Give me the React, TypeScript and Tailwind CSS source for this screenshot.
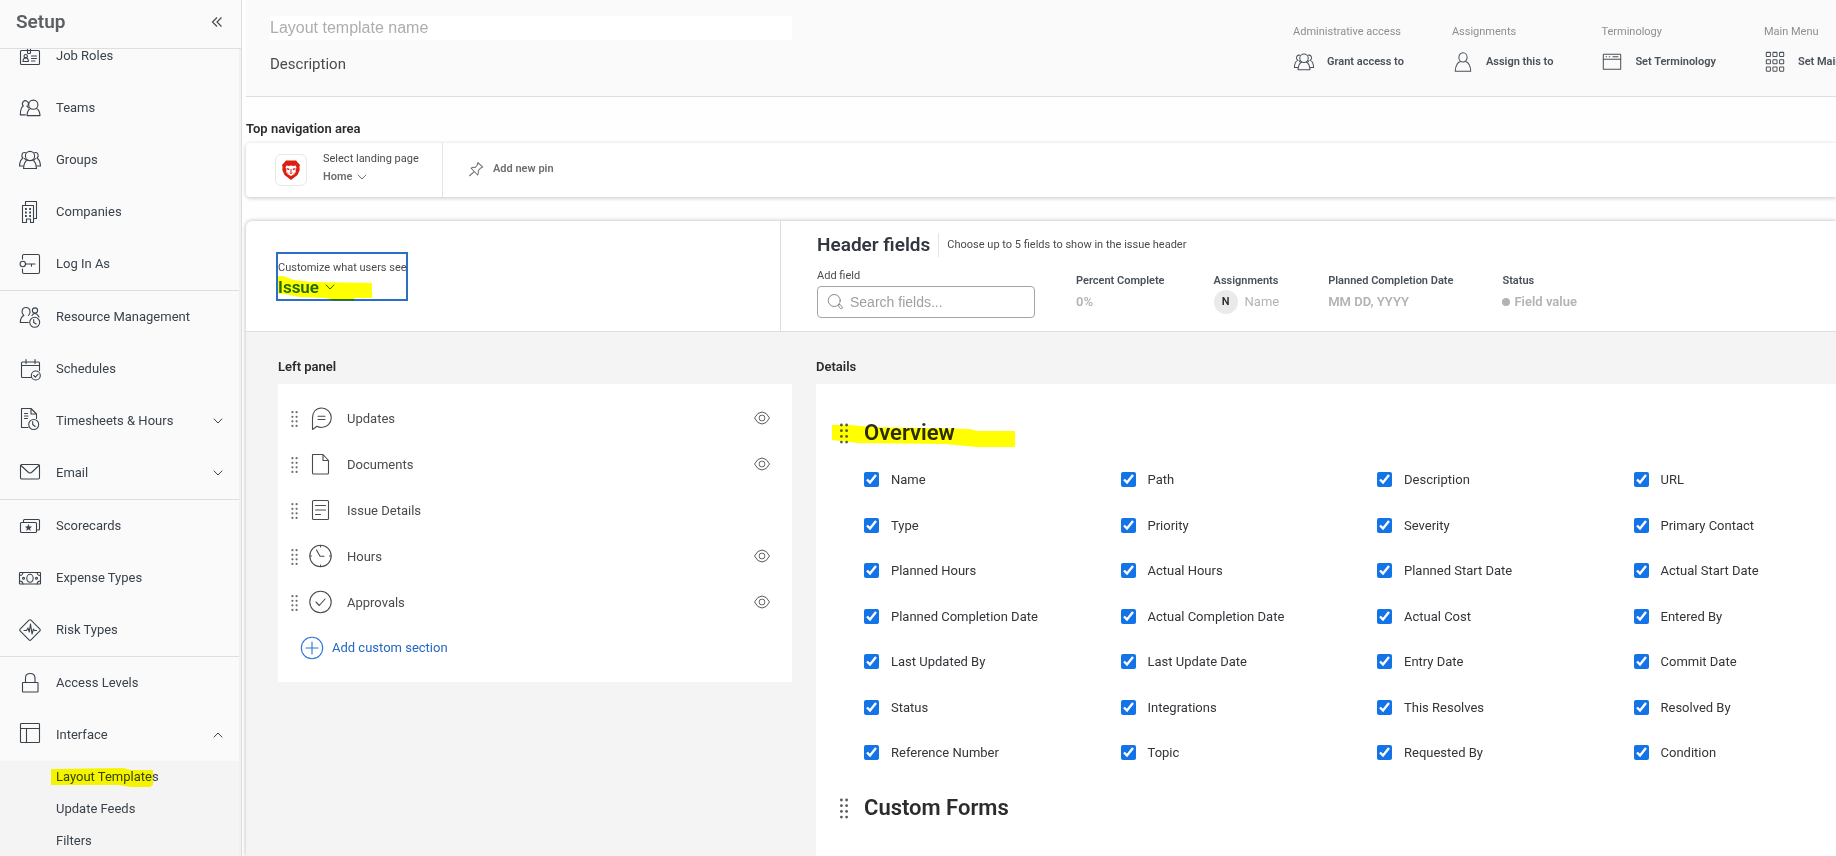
import React from "react";

interface INavItem {
	label: string;
	icon: React.ReactNode;
	chevron?: "up" | "down";
}

function Icon({ children, className = "size-6" }: { children: React.ReactNode; className?: string }) {
	return (
		<svg
			className={`shrink-0 overflow-visible ${className}`}
			viewBox="0 0 24 24"
			fill="none"
			stroke="currentColor"
			strokeWidth="1.1"
			strokeLinecap="round"
			strokeLinejoin="round"
			aria-hidden="true"
		>
			{children}
		</svg>
	);
}

function Chevron({ up = false }: { up?: boolean }) {
	return (
		<svg className="w-[10px] shrink-0" viewBox="0 0 10 6" fill="none" stroke="currentColor" aria-hidden="true">
			<path d={up ? "M.8 5.300L5 1L9.200 5.300" : "M.8 .7L5 5L9.200 .7"} />
		</svg>
	);
}

function Dots({ className }: { className: string }) {
	return (
		<svg className={`shrink-0 ${className}`} viewBox="0 0 8 20" fill="currentColor" aria-hidden="true">
			{[1.5, 7.2, 12.9, 18.6].map((y) => (
				<g key={y}>
					<circle cx="1.4" cy={y} r="1.4" />
					<circle cx="6.6" cy={y} r="1.4" />
				</g>
			))}
		</svg>
	);
}

const jobRoles = (
	<>
		<rect x="2.5" y="6.5" width="19" height="14" rx="1" />
		<path d="M9.5 4v4.5q0 1 1 1h1q1 0 1-1V4" />
		<circle cx="7.7" cy="12.2" r="1.7" />
		<path d="M5 17.5q0-3 1.8-3.6h1.8q1.8.6 1.8 3.6zM13.5 12h5M13.5 14.5h5M13.5 17h3.5" />
	</>
);

const teams = (
	<>
		<circle cx="15.3" cy="8.7" r="4.6" />
		<path d="M12.6 12.6q-3.2 1.2-3.6 7h13q-.4-5.800-3.600-7" />
		<path d="M10 9.300a3 3 0 1 0-4.700.600Q2.600 11 2.300 18.900h5" />
		<path d="M8.800 10q1.200.800 1.700 2" />
	</>
);

const groups = (
	<>
		<circle cx="12" cy="8" r="4.600" />
		<path d="M9.600 12q-3.700 1.400-4.100 8.500h13q-.4-7.100-4.100-8.500" />
		<path d="M7.500 4.700q-2.600-.8-3.500 1.600q-.6 2.300 1 3.900Q1.900 11.500 1.500 18H5" />
		<path d="M16.500 4.700q2.600-.8 3.500 1.600q.6 2.300-1 3.900q3.100 1.300 3.500 7.800H19" />
		<path d="M6.500 10.500l1.300 1.400M17.500 10.500l-1.300 1.400" />
	</>
);

const person = (
	<>
		<ellipse cx="12" cy="7" rx="4.500" ry="5" />
		<path d="M9 11.500q-5 2-5.500 10.500h17q-.5-8.500-5.500-10.500" />
	</>
);

const companies = (
	<>
		<path d="M4.500 5.500h11v17h-3v-3.500h-4v3.500h-4z" />
		<path d="M7.500 5V1.500h11v17h-2.500" />
		<path strokeWidth="1.800" strokeLinecap="butt" d="M7 9h1.800M11.200 9H13M7 12.500h1.800M11.200 12.500H13M7 16h1.800M11.200 16H13" />
	</>
);

const navGroups: INavItem[][] = [
	[
		{ label: "Job Roles", icon: jobRoles },
		{ label: "Teams", icon: teams },
		{ label: "Groups", icon: groups },
		{ label: "Companies", icon: companies },
		{
			label: "Log In As",
			icon: (
				<>
					<path d="M4.500 7V4q0-1.500 1.500-1.500h14q1.500 0 1.500 1.500v16q0 1.500-1.500 1.500H6q-1.500 0-1.500-1.500v-3" />
					<circle cx="4.800" cy="12" r="2.700" />
					<path d="M7.500 12H17M13.500 12v2.200" />
				</>
			),
		},
	],
	[
		{
			label: "Resource Management",
			icon: (
				<>
					<path d="M5.800 10.500C2.500 7 4 2.500 8 2.500s5.500 4.500 2.500 8M5.800 10.500Q2.500 12 2.300 17.500h8" />
					<circle cx="17" cy="5.500" r="2.600" />
					<path d="M14 10.500q1-2 3-2t4 3.500" />
					<circle cx="16.700" cy="17.300" r="5" />
					<path d="M15.700 14.500v3l2.500 1.500" />
				</>
			),
		},
		{
			label: "Schedules",
			icon: (
				<>
					<path d="M13 20.500H4.500q-1 0-1-1V6q0-1 1-1h16q1 0 1 1v7.500M3.500 8.500h18M8 2.500v4M17 2.500v4" />
					<circle cx="17.800" cy="18.500" r="4.500" />
					<path d="M15.700 18.500l1.700 1.700 2.700-3" />
				</>
			),
		},
		{
			label: "Timesheets & Hours",
			chevron: "down",
			icon: (
				<>
					<path d="M10 18.500H3.500v-19h9.500l5.500 5.500v4.500M13 -.5V5h5.500M6.500 4.500h3M6.500 7h3.500M6.500 9.500h3" />
					<circle cx="15.700" cy="15.500" r="5" />
					<path d="M14.700 12.500v3l2.500 2" />
				</>
			),
		},
		{
			label: "Email",
			chevron: "down",
			icon: (
				<>
					<rect x="2.500" y="3.500" width="19" height="14.500" rx="1.200" />
					<path d="M3 4.500l7.500 7q1.500 1 3 0L21 4.500" />
				</>
			),
		},
	],
	[
		{
			label: "Scorecards",
			icon: (
				<>
					<rect x="2.500" y="8.500" width="16" height="10" rx="1" />
					<path d="M5.500 8V6.500q0-1 1-1h14q1 0 1 1v8.500q0 1-1 1h-1.500" />
					<path fill="currentColor" strokeWidth=".3" d="M10.500 10.500l.9 2.100 2.300.1-1.800 1.500.6 2.300-2-1.300-2 1.300.6-2.300-1.800-1.500 2.300-.1z" />
				</>
			),
		},
		{
			label: "Expense Types",
			icon: (
				<>
					<rect x="1.500" y="6.500" width="21" height="11.500" rx=".5" />
					<ellipse cx="12" cy="12.300" rx="3.200" ry="4" />
					<circle cx="5.500" cy="12.300" r="1" />
					<circle cx="18.500" cy="12.300" r="1" />
					<path d="M2 9.500q2.500 0 3-3M22 9.500q-2.500 0-3-3M2 15q2.500 0 3 3M22 15q-2.500 0-3 3" />
				</>
			),
		},
		{
			label: "Risk Types",
			icon: (
				<>
					<path d="M11 2.200q1-1 2 0l8.900 8.900q.9.900 0 1.800L13 21.800q-1 1-2 0L2.100 12.900q-.9-.9 0-1.800z" />
					<path d="M6 12.500h2.500l1.500-2.500 1.300 4 1.200-8 1.500 10 1.500-5 .9 1.500h2.100" />
				</>
			),
		},
	],
	[
		{
			label: "Access Levels",
			icon: (
				<>
					<rect x="4.500" y="11.500" width="15.500" height="9.500" rx=".5" />
					<path d="M7.500 11V7q0-4.500 4.700-4.500T17 7v4" />
				</>
			),
		},
		{
			label: "Interface",
			chevron: "up",
			icon: (
				<>
					<rect x="2.500" y=".5" width="19" height="19" rx=".8" />
					<path d="M2.500 5.500h19M8.500 5.500v14" />
				</>
			),
		},
	],
];

const headerActions = [
	{ title: "Administrative access", label: "Grant access to", icon: groups },
	{ title: "Assignments", label: "Assign this to", icon: person },
	{
		title: "Terminology",
		label: "Set Terminology",
		icon: (
			<>
				<rect x="2.500" y="3.500" width="19" height="16.500" rx=".5" />
				<path d="M2.500 9h19M5.500 6.300h.6M9 6.300h.6M13 6.300h5.500" />
			</>
		),
	},
	{
		title: "Main Menu",
		label: "Set Main Menu",
		icon: (
			<>
				{[1.5, 9.5, 17.5].map((y) =>
					[2.5, 9.7, 17].map((x) => <rect key={`${x}-${y}`} x={x} y={y} width="4.500" height="4.500" rx=".6" />)
				)}
			</>
		),
	},
];

const panelItems = [
	{
		label: "Updates",
		visible: true,
		icon: (
			<>
				<path d="M4.500 22.500V11C4.500 5 8 1 13.500 1S23.300 5.500 23.300 10.800 19 20.500 13.500 20.500q-2.500 0-4.500-1.200z" />
				<path d="M10 9.200h7M10 12.500h7" />
			</>
		),
	},
	{
		label: "Documents",
		visible: true,
		icon: <path d="M4.500 1.500h10.500l5.500 6v12.500q0 1-1 1h-14q-1 0-1-1zM15 1.500v6h5.500" />,
	},
	{
		label: "Issue Details",
		visible: false,
		icon: (
			<>
				<rect x="4.500" y="1.500" width="16" height="19" rx="1" />
				<path d="M7.500 6.500h10M7.500 11h10M7.500 15.500h5" />
			</>
		),
	},
	{
		label: "Hours",
		visible: true,
		icon: (
			<>
				<circle cx="12.500" cy="11" r="10.700" />
				<path d="M8.500 5l3.500 6.300h4M12.500 .5V2M12.500 20v1.500M2 11h1.500M21.500 11H23" />
			</>
		),
	},
	{
		label: "Approvals",
		visible: true,
		icon: (
			<>
				<circle cx="12.500" cy="11" r="10.700" />
				<path d="M8 11l3.300 3.500L17 8" />
			</>
		),
	},
];

const fields = [
	"Name", "Path", "Description", "URL",
	"Type", "Priority", "Severity", "Primary Contact",
	"Planned Hours", "Actual Hours", "Planned Start Date", "Actual Start Date",
	"Planned Completion Date", "Actual Completion Date", "Actual Cost", "Entered By",
	"Last Updated By", "Last Update Date", "Entry Date", "Commit Date",
	"Status", "Integrations", "This Resolves", "Resolved By",
	"Reference Number", "Topic", "Requested By", "Condition",
];

function Sidebar() {
	return (
		<aside className="w-[242px] shrink-0 flex flex-col border-r border-[#dedede] bg-[#f1f1f1]">
			<div className="h-[49px] shrink-0 flex items-center justify-between pl-4 pr-[18px] pb-1 border-b border-[#dedede] bg-[#fafafa]">
				<h1 className="text-[19px] leading-6 font-semibold text-[#5c5f63]">Setup</h1>
				<button type="button" aria-label="Collapse" className="text-[#4b4b4b]">
					<svg width="12" height="12" viewBox="0 0 12 12" fill="none" stroke="currentColor" strokeWidth="1.200">
						<path d="M6 1.500L1.500 6L6 10.500M10.500 1.500L6 6L10.500 10.500" />
					</svg>
				</button>
			</div>
			<nav className="flex-1 min-h-0 overflow-hidden mr-[2px] bg-[#fafafa]">
				<div className="-mt-5">
					{navGroups.map((group, i) => (
						<ul key={i} className="border-t border-[#dedede]">
							{group.map((item) => (
								<li key={item.label}>
									<a href="#" className="h-13 flex items-center gap-[14px] pl-[18px] pr-4 text-[13px] leading-4 text-[#3a424b]">
										<Icon>{item.icon}</Icon>
										<span className="flex-1">{item.label}</span>
										{item.chevron && <Chevron up={item.chevron === "up"} />}
									</a>
								</li>
							))}
						</ul>
					))}
					<ul className="bg-[#f4f4f4]">
						{["Layout Templates", "Update Feeds", "Filters"].map((label, i) => (
							<li key={label}>
								<a href="#" className="relative h-8 flex items-center pl-14 text-[13px] leading-4 text-[#3a424b]">
									{label}
									{i === 0 && (
										<svg className="absolute left-[51px] top-[7px] mix-blend-multiply" width="102" height="20" viewBox="0 0 102 20" fill="#ffff00" aria-hidden="true">
											<path d="M0 1L72 0L80 2H102V17L99 19H80L68 17H0z" />
										</svg>
									)}
								</a>
							</li>
						))}
					</ul>
				</div>
			</nav>
		</aside>
	);
}

function TemplateHeader() {
	return (
		<header className="h-[97px] flex border-b border-[#dedede] bg-[#fafafa] overflow-hidden">
			<div className="flex-1 min-w-0 pl-6 pt-4">
				<input
					type="text"
					aria-label="Layout template name"
					placeholder="Layout template name"
					className="block w-[51%] h-6 bg-white font-['Liberation_Sans',sans-serif] text-[16px] text-[#4b4b4b] placeholder:text-[#adadad] outline-none"
				/>
				<p className="mt-3 text-[15px] leading-6 text-[#4b4b4b]">Description</p>
			</div>
			<div className="w-[543px] shrink-0 flex gap-12 pt-6 whitespace-nowrap">
				{headerActions.map((action) => (
					<div key={action.title} className="shrink-0">
						<p className="text-[11px] leading-4 text-[#8c8f93]">{action.title}</p>
						<button type="button" className="mt-[11px] flex items-center gap-3 text-[11px] font-semibold text-[#4a5059]">
							<Icon className="size-[22px]">{action.icon}</Icon>
							{action.label}
						</button>
					</div>
				))}
			</div>
		</header>
	);
}

function TopNavigation() {
	return (
		<section>
			<h2 className="pt-[22px] pb-1 text-[13px] leading-5 font-semibold text-[#2c2c2c]">Top navigation area</h2>
			<div className="h-[54px] flex rounded-l bg-white shadow-[0_1px_4px_rgba(0,0,0,0.22)]">
				<div className="w-[197px] flex items-center gap-4 pl-[29px] border-r border-[#e4e4e4]">
					<div className="size-8 flex items-center justify-center rounded-md border border-[#e8e8e8]">
						<svg width="18" height="20" viewBox="0 0 18 20" aria-hidden="true">
							<path fill="#dd1f12" d="M4 .5h10l1.500 1.800L18 5l-.6 2 .3 3-2.200 5L9 20l-6.500-5L.3 10l.3-3L0 5l2.500-2.700z" />
							<path fill="#fff" d="M4.500 5.500l2.500.5L9 5.500l2 .5 2.500-.5 1 2.300-1 2.200.3 2-1.300 2L9 16l-3.500-2L4.200 12l.3-2-1-2.200z" />
							<path
								fill="#dd1f12"
								d="M4.500 8l3 .8-.5 1.400-2.300-.9zM13.500 8l-3 .8.5 1.400 2.300-.9zM7.300 12.500h3.400L9 14.200zM8.500 9h1v3h-1zM5.500 12l1 2-1-.5zM12.500 12l-1 2 1-.5z"
							/>
						</svg>
					</div>
					<div className="pb-1">
						<label htmlFor="landing" className="block text-[11px] leading-[18px] text-[#4b4b4b]">
							Select landing page
						</label>
						<div className="flex items-center gap-1 text-[#6e6e6e]">
							<select id="landing" className="appearance-none field-sizing-content bg-transparent text-[11px] leading-[18px] font-semibold outline-none">
								<option>Home</option>
							</select>
							<Chevron />
						</div>
					</div>
				</div>
				<button type="button" className="flex items-center gap-2 pl-6 pb-[2px] text-[11px] font-semibold text-[#6e6e6e]">
					<Icon className="size-[18px]">
						<path strokeWidth="1.400" d="M14.500 3.500l6.500 6-2 1-1 .3-3 3.500q.7 3-.8 5.700L5.500 11q2.500-1.700 5.500-1l2.500-3zM9.500 15.500L3.500 21" />
					</Icon>
					Add new pin
				</button>
			</div>
		</section>
	);
}

function HeaderFields() {
	const title = "text-[11px] leading-[18px] font-semibold text-[#4a5059]";
	const value = "h-6 flex items-center text-[13px] text-[#b3b3b3]";
	return (
		<div className="h-[111px] flex border-b border-[#dedede]">
			<div className="w-[535px] shrink-0 pl-[30px] pt-[31px] border-r border-[#dedede]">
				<div className="relative w-[132px] h-[49px] border-2 border-[#2a6fc4] pt-[5px]">
					<label htmlFor="object" className="block text-[11px] leading-[18px] whitespace-nowrap text-[#4b4b4b]">
						Customize what users see
					</label>
					<div className="flex items-center gap-[6px] text-[#1f6bc0]">
						<select id="object" className="appearance-none field-sizing-content bg-transparent text-[17px] leading-5 font-semibold outline-none">
							<option>Issue</option>
						</select>
						<Chevron />
					</div>
					<svg className="absolute left-0 top-[22px] mix-blend-multiply" width="94" height="25" viewBox="0 0 94 25" fill="#ffff00" aria-hidden="true">
						<path d="M0 0L5 0L16 4L34 6L94 7V22H76V24.500H56L48 22L22 21L0 17z" />
					</svg>
				</div>
			</div>
			<div className="flex-1 pl-9 pt-3">
				<div className="h-6 flex items-center gap-2">
					<h2 className="text-[19px] leading-6 font-semibold text-[#31363f]">Header fields</h2>
					<p className="h-6 flex items-center pl-2 border-l border-[#e4e4e4] text-[11px] text-[#4b4b4b]">
						Choose up to 5 fields to show in the issue header
					</p>
				</div>
				<div className="flex gap-[49px]">
					<div className="w-[218px] mt-[9px] -mr-2">
						<label htmlFor="search" className="block text-[11px] leading-5 text-[#4b4b4b]">
							Add field
						</label>
						<div className="h-8 flex items-center gap-[6px] px-2 rounded border border-[#a5a5a5]">
							<Icon className="size-[18px] text-[#6e6e6e]">
								<circle cx="11" cy="10" r="8" />
								<path d="M16.500 16l2-1 3 3.500q1 2-1 2.500-1 .2-1.800-.8z" />
							</Icon>
							<input
								id="search"
								type="text"
								placeholder="Search fields..."
								className="flex-1 min-w-0 font-['Liberation_Sans',sans-serif] text-[14px] placeholder:text-[#a0a0a0] outline-none"
							/>
						</div>
					</div>
					<div className="pt-[15px]">
						<p className={title}>Percent Complete</p>
						<p className={`${value} font-semibold`}>0%</p>
					</div>
					<div className="pt-[15px]">
						<p className={title}>Assignments</p>
						<p className={`${value} gap-[7px]`}>
							<span className="size-6 flex items-center justify-center rounded-full bg-[#eaeaea] text-[11px] font-semibold text-[#2c2c2c]">N</span>
							Name
						</p>
					</div>
					<div className="pt-[15px]">
						<p className={title}>Planned Completion Date</p>
						<p className={`${value} font-semibold`}>MM DD, YYYY</p>
					</div>
					<div className="pt-[15px]">
						<p className={title}>Status</p>
						<p className={`${value} gap-1 font-semibold`}>
							<span className="size-2 rounded-full bg-[#b3b3b3]" />
							Field value
						</p>
					</div>
				</div>
			</div>
		</div>
	);
}

function LeftPanel() {
	return (
		<section className="w-[514px] shrink-0">
			<h2 className="pb-[7px] text-[13px] leading-5 font-semibold text-[#2c2c2c]">Left panel</h2>
			<div className="h-[298px] pt-3 bg-white">
				<ul>
					{panelItems.map((item) => (
						<li key={item.label} className="h-[46px] flex items-center pl-[13px] pr-[22px] text-[13px] text-[#4b4b4b]">
							<Dots className="w-[7px] h-4 text-[#6e6e6e]" />
							<Icon className="size-6 ml-[10px] mr-[15px]">{item.icon}</Icon>
							<span className="flex-1">{item.label}</span>
							{item.visible && (
								<button type="button" aria-label={`Hide ${item.label}`} className="pb-[2px] text-[#5a5a5a]">
									<svg width="16" height="14" viewBox="0 0 16 14" fill="none" stroke="currentColor">
										<path d="M.5 7Q3.500 1 8 1t7.500 6Q12.500 13 8 13T.5 7z" />
										<rect x="5.300" y="4.300" width="5.400" height="5.400" rx="2" />
									</svg>
								</button>
							)}
						</li>
					))}
				</ul>
				<button type="button" className="h-11 flex items-center gap-2 pl-[22px] text-[13px] text-[#2468c2]">
					<Icon className="size-6 text-[#2a78d0]">
						<circle cx="12" cy="12" r="10.700" />
						<path d="M12 6v12M6 12h12" />
					</Icon>
					Add custom section
				</button>
			</div>
		</section>
	);
}

function Details() {
	return (
		<section className="flex-1 min-w-0 flex flex-col">
			<h2 className="pb-[7px] text-[13px] leading-5 font-semibold text-[#2c2c2c]">Details</h2>
			<div className="flex-1 pl-6 pt-[33px] bg-white">
				<div className="relative h-8 flex items-center gap-4">
					<Dots className="w-2 h-[21px] text-[#5a5a5a]" />
					<h3 className="text-[22px] leading-8 font-semibold text-[#2c2c2c]">Overview</h3>
					<svg className="absolute -left-2 top-[7px] mix-blend-multiply" width="184" height="24" viewBox="0 0 184 24" fill="#ffff00" aria-hidden="true">
						<path d="M0 1L18 1L40 3L138 5L145 7H183V23H145L112 20L26 19L0 16z" />
					</svg>
				</div>
				<div className="h-[288px] mt-[23px] pl-6 grid grid-cols-[19fr_19fr_19fr_15fr] content-between">
					{fields.map((field) => (
						<label key={field} className="h-[15px] flex items-center gap-3 text-[13px] leading-[15px] text-[#323539]">
							<input type="checkbox" defaultChecked className="size-[15px] accent-[#1473e6]" />
							{field}
						</label>
					))}
				</div>
				<div className="h-8 mt-8 flex items-center gap-4">
					<Dots className="w-2 h-[21px] text-[#5a5a5a]" />
					<h3 className="text-[22px] leading-8 font-semibold text-[#2c2c2c]">Custom Forms</h3>
				</div>
			</div>
		</section>
	);
}

export default function App() {
	return (
		<div className="h-screen flex overflow-hidden bg-[#fefefe] font-[Roboto,sans-serif]">
			<Sidebar />
			<main className="flex-1 min-w-0 ml-1 flex flex-col">
				<TemplateHeader />
				<TopNavigation />
				<section className="flex-1 mt-6 flex flex-col rounded-tl-md bg-white shadow-[0_0_4px_rgba(0,0,0,0.3)]">
					<HeaderFields />
					<div className="flex-1 flex gap-6 pl-8 pt-[25px] bg-[#f4f4f4]">
						<LeftPanel />
						<Details />
					</div>
				</section>
			</main>
		</div>
	);
}
